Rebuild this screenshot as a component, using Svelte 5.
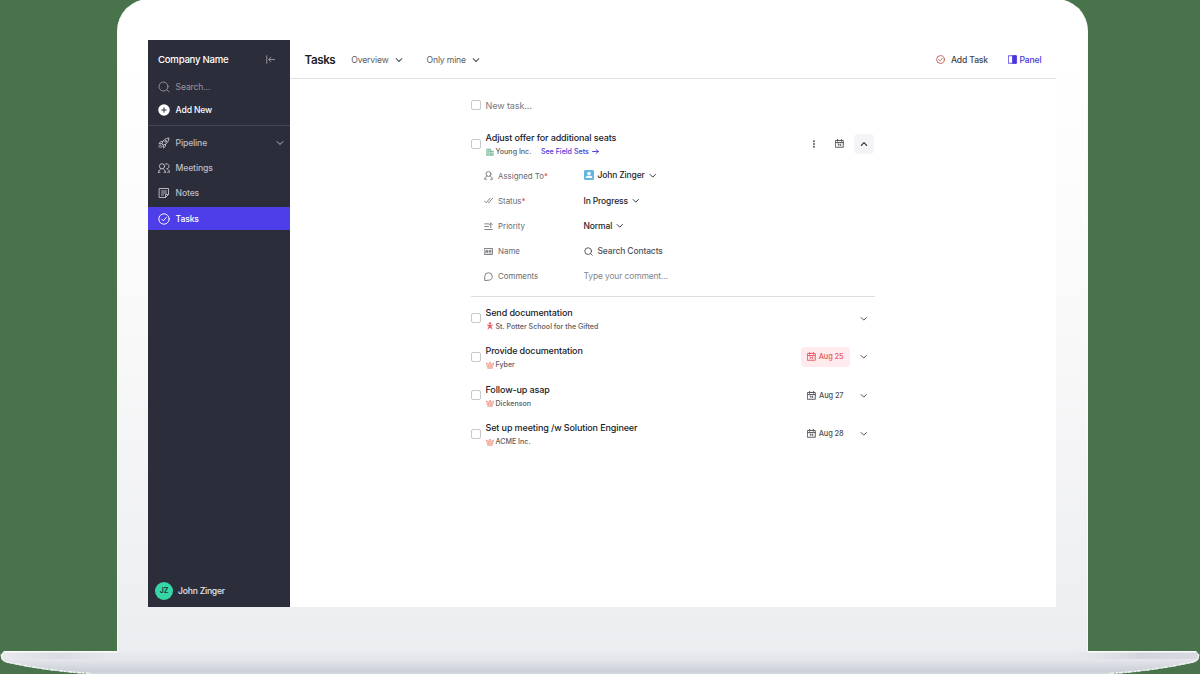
<script lang="ts">
  type Task = { title: string; company: string; icon: string; due?: string; late?: boolean };

  const nav = [
    { label: 'Pipeline', icon: 'rocket', expandable: true },
    { label: 'Meetings', icon: 'people' },
    { label: 'Notes', icon: 'note' },
    { label: 'Tasks', icon: 'check' },
  ];

  const fields = [
    { label: 'Assigned To', icon: 'person', required: true, value: 'John Zinger', kind: 'user' },
    { label: 'Status', icon: 'double', required: true, value: 'In Progress', kind: 'select' },
    { label: 'Priority', icon: 'priority', value: 'Normal', kind: 'select' },
    { label: 'Name', icon: 'card', value: 'Search Contacts', kind: 'search' },
    { label: 'Comments', icon: 'comment', value: 'Type your comment...', kind: 'input' },
  ];

  const tasks: Task[] = [
    { title: 'Send documentation', company: 'St. Potter School for the Gifted', icon: 'star' },
    { title: 'Provide documentation', company: 'Fyber', icon: 'crown', due: 'Aug 25', late: true },
    { title: 'Follow-up asap', company: 'Dickenson', icon: 'crown', due: 'Aug 27' },
    { title: 'Set up meeting /w Solution Engineer', company: 'ACME Inc.', icon: 'crown', due: 'Aug 28' },
  ];

  let active = $state('Tasks');
</script>

{#snippet icon(name: string, size: number, stroke = 1.5)}
  <svg class="icon" width={size} height={size} viewBox="0 0 24 24" fill="none" stroke="currentColor" stroke-width={stroke} stroke-linecap="round" stroke-linejoin="round">
    {#if name === 'search'}
      <circle cx="11" cy="11" r="9" /><path d="M17.5 17.5 22 22" />
    {:else if name === 'collapse'}
      <path d="M2 2v20M23 12H8M13 6 7 12l6 6" />
    {:else if name === 'plus'}
      <circle cx="12" cy="12" r="11.5" fill="#fff" stroke="none" /><path d="M12 7.5v9M7.5 12h9" stroke="#2c2d3c" />
    {:else if name === 'rocket'}
      <path d="M8 13c1.5-6 6-10.5 14-11-.5 8-5 12.5-11 14z" />
      <path d="M9.5 9H5.5L2 13l5.5.5M15 14.5v4L11 22l-.5-5.5" />
      <path d="M6 16.5 2 20.5M8.5 18.5 5.5 21.5M3.5 15.5 2 17" />
      <circle cx="15.5" cy="8.5" r="1.8" />
    {:else if name === 'people'}
      <circle cx="8" cy="8.5" r="5.2" /><path d="M1 20.5c.4-3.800 2.500-6 5-6.700M10 13.800c2.500.7 4.600 2.900 5 6.700M1 20.500h3M12 20.500h3" />
      <path d="M14.5 4.2a5 5 0 1 1 2.500 9.300c3.500.6 5.600 3 6 7h-4" />
    {:else if name === 'note'}
      <path d="M3 3h18v12l-6 6H3zM15 21v-6h6M7 8h10M7 12h10M7 16h4" />
    {:else if name === 'check'}
      <circle cx="12" cy="12" r="10.4" /><path d="m7.5 12.3 3.200 3.200 6-6.500" />
    {:else if name === 'down'}
      <path d="m3.500 8 8.500 8.500L20.500 8" />
    {:else if name === 'up'}
      <path d="m4 16 8-8 8 8" />
    {:else if name === 'right'}
      <path d="M2 12h20M14 5l7.5 7-7.500 7" />
    {:else if name === 'person'}
      <circle cx="12" cy="8" r="6.5" /><path d="M8 13.5C4.500 15 2 17.500 1.500 22h5M16 13.500c3.500 1.500 6 4 6.500 8.500h-5" />
    {:else if name === 'double'}
      <path d="m1 13 5 5L16 6M11.5 17l1 1L23 6" />
    {:else if name === 'priority'}
      <path d="M2 5h10M2 12h10M2 20h20M18 15V3M14 7l4-4 4 4" />
    {:else if name === 'card'}
      <path d="M1.5 4h21v16h-21zM5 16V9h5v7M5 13h5M14 9h5M14 12h5M14 16h5" />
    {:else if name === 'comment'}
      <path d="M2 22V12A10 10 0 1 1 12 22z" />
    {:else if name === 'calendar'}
      <path d="M2 4h20v18H2zM2 9.5h20M7 1v5M17 1v5M8 13.500h3l-1 4M15 13.500v4" />
    {:else if name === 'dots'}
      <g fill="currentColor" stroke="none"><circle cx="12" cy="3.5" r="2.9" /><circle cx="12" cy="12" r="2.9" /><circle cx="12" cy="20.5" r="2.9" /></g>
    {:else if name === 'panel'}
      <path d="M2 2h20v20H2z" /><path d="M13 2h9v20h-9z" fill="currentColor" />
    {:else if name === 'building'}
      <path d="M1 2h14v6h8v15H1z" fill="#7fb99c" stroke="none" /><path d="M4 7h3M10 7h2M4 12h3M4 17h3M10 12v11M14 14h9M17 18h3" stroke="#fff" />
    {:else if name === 'star'}
      <g fill="currentColor" stroke="none"><circle cx="12" cy="4" r="3.5" /><path d="M1 8h22l-7 5 4 10-8-6-8 6 4-10z" /></g>
    {:else if name === 'crown'}
      <path d="M4 17 1.5 6 8 11l4-8 4 8 6.500-5L20 17zM5 21.500h14" />
      <path d="M8 12v4M12 9v7M16 12v4" />
    {/if}
  </svg>
{/snippet}

<div class="backdrop">
  <div class="laptop">
    <div class="screen">
      <aside class="sidebar">
        <div class="company">
          <span>Company Name</span>
          {@render icon('collapse', 9, 2.2)}
        </div>
        <div class="quick search">{@render icon('search', 12, 1.8)}<span>Search...</span></div>
        <div class="quick add">{@render icon('plus', 12, 2)}<span>Add New</span></div>
        <nav>
          {#each nav as item}
            <button class="nav-item" class:active={active === item.label} onclick={() => (active = item.label)}>
              {@render icon(item.icon, 12, 1.9)}
              <span>{item.label}</span>
              {#if item.expandable}
                <i>{@render icon('down', 8, 3)}</i>
              {/if}
            </button>
          {/each}
        </nav>
        <div class="account">
          <span class="avatar">JZ</span>
          <span>John Zinger</span>
        </div>
      </aside>

      <main>
        <header>
          <h1>Tasks</h1>
          <div class="filter overview"><span>Overview</span>{@render icon('down', 8, 3.2)}</div>
          <div class="filter"><span>Only mine</span>{@render icon('down', 8, 3.2)}</div>
          <div class="header-actions">
            <div class="add-task">{@render icon('check', 9, 2.5)}<span>Add Task</span></div>
            <div class="panel">{@render icon('panel', 9, 2.2)}<span>Panel</span></div>
          </div>
        </header>

        <section class="list">
          <div class="new-task"><span class="box"></span><span>New task...</span></div>

          <article class="open">
            <div class="task">
              <span class="box"></span>
              <div class="summary">
                <h2>Adjust offer for additional seats</h2>
                <p>
                  {@render icon('building', 8, 1.8)}<span>Young Inc.</span>
                  <a href="#fields">See Field Sets {@render icon('right', 7, 3.2)}</a>
                </p>
              </div>
              <div class="tools">
                <b>{@render icon('dots', 8)}</b>
                <b>{@render icon('calendar', 9, 2.5)}</b>
                <b class="toggle">{@render icon('up', 8, 3.5)}</b>
              </div>
            </div>
            <div class="fields">
              {#each fields as field}
                <div class="field">
                  <div class="label">
                    {@render icon(field.icon, 9, 2.2)}
                    <span>{field.label}{#if field.required}<em>*</em>{/if}</span>
                  </div>
                  <div class="value {field.kind}">
                    {#if field.kind === 'user'}
                      <svg class="icon" width="10" height="10" viewBox="0 0 20 20">
                        <rect width="20" height="20" rx="3" fill="#62b6df" />
                        <circle cx="10" cy="7" r="3.5" fill="#fff" />
                        <path d="M3.5 16v-1.500c0-2 2-3 6.500-3s6.500 1 6.500 3V16z" fill="#fff" />
                      </svg>
                    {:else if field.kind === 'search'}
                      {@render icon('search', 9, 2.4)}
                    {/if}
                    <span>{field.value}</span>
                    {#if field.kind === 'user' || field.kind === 'select'}
                      {@render icon('down', 7.5, 3)}
                    {/if}
                  </div>
                </div>
              {/each}
            </div>
          </article>

          {#each tasks as task}
            <div class="task">
              <span class="box"></span>
              <div class="summary">
                <h2>{task.title}</h2>
                <p class={task.icon}>{@render icon(task.icon, 8, 2.4)}<span>{task.company}</span></p>
              </div>
              <div class="tools">
                {#if task.due}
                  <span class="due" class:late={task.late}>{@render icon('calendar', 9, 2.5)}{task.due}</span>
                {/if}
                <b class="plain">{@render icon('down', 7.5, 3.2)}</b>
              </div>
            </div>
          {/each}
        </section>
      </main>
    </div>
  </div>

  <svg class="base" width="1200" height="23" viewBox="0 0 1200 23">
    <defs>
      <linearGradient id="metal" x1="0" y1="0" x2="0" y2="1">
        <stop offset="0" stop-color="#ebecef" />
        <stop offset="0.4" stop-color="#e3e5ea" />
        <stop offset="0.85" stop-color="#ccd1d9" />
        <stop offset="1" stop-color="#d3d8e0" />
      </linearGradient>
      <linearGradient id="ends" x1="0" y1="0" x2="1" y2="0">
        <stop offset="0" stop-color="#e9eaee" />
        <stop offset="0.05" stop-color="#dadbe2" />
        <stop offset="0.12" stop-color="#e9eaed" stop-opacity="0" />
        <stop offset="0.88" stop-color="#e9eaed" stop-opacity="0" />
        <stop offset="0.95" stop-color="#d3d4dd" />
        <stop offset="1" stop-color="#d8d9e1" />
      </linearGradient>
    </defs>
    <path d="M4 0H1196q3 2 3 7-1 4-7 5-42 9-82 11H92Q48 21 8 12q-6-1-7-5 0-5 3-7z" fill="url(#metal)" />
    <path d="M4 1H1196q3 2 3 7H1q0-5 3-7z" fill="url(#ends)" />
    <path d="M4 .8H117M1088 .8H1196" stroke="#fafbfa" stroke-width="1.6" />
    <path d="M1.5 3q-1 5 6 8 42 9 84 11.500M1198.500 3q1 5-6 8-42 9-84 11.500" fill="none" stroke="#eef5ef" stroke-width="1.5" stroke-dasharray="4 1 2 2" />
  </svg>
</div>

<style>
  :global(body) {
    background: #48734b;
    overflow: hidden;
  }

  .backdrop {
    width: 1200px;
    height: 674px;
    background: #48734b;
    font-family: Inter, 'Liberation Sans', sans-serif;
    font-size: 9px;
    color: #25262b;
    position: relative;
    overflow: hidden;
  }

  .laptop {
    box-sizing: border-box;
    width: 971.5px;
    height: 654px;
    margin: -1px 0 0 116.5px;
    padding: 41px 0 0 31.5px;
    border: solid #f7faf7;
    border-width: 0 1px;
    border-radius: 32px 32px 0 0;
    background: linear-gradient(#fff 0, #fff 10%, #f9f9fa 50%, #eff0f2 88%, #ecedf0);
  }

  .screen {
    display: flex;
    width: 907.5px;
    height: 567px;
    margin-left: -1px;
    background: #fff;
  }

  .base {
    position: absolute;
    left: 0;
    top: 651px;
  }

  .icon {
    flex: none;
    display: block;
  }

  .sidebar {
    width: 141.5px;
    display: flex;
    flex-direction: column;
    background: #2c2d3a;
    color: #e6e6eb;
    font-size: 8.6px;
    letter-spacing: -0.14px;
    font-weight: 500;
  }

  .company {
    height: 38px;
    padding: 0 15px 0 10px;
    display: flex;
    align-items: center;
    justify-content: space-between;
    font-size: 9.6px;
    letter-spacing: -0.24px;
    color: #fff;
  }

  .company .icon {
    color: #a5a6b0;
  }

  .quick {
    height: 23px;
    padding-left: 10px;
    display: flex;
    align-items: center;
    gap: 5.6px;
  }

  .quick.search {
    margin-top: -3px;
    color: #9798a3;
    font-weight: 400;
  }

  .quick.add {
    color: #fff;
  }

  nav {
    border-top: 1px solid #454653;
    margin-top: 4px;
    padding-top: 5px;
  }

  .nav-item {
    width: 100%;
    height: 23px;
    margin: 0 0 2.2px;
    padding: 1px 6px 0 10px;
    border: none;
    background: none;
    display: flex;
    align-items: center;
    gap: 5.6px;
    font: inherit;
    letter-spacing: inherit;
    color: #bdbec8;
    cursor: pointer;
  }

  .nav-item i {
    margin-left: auto;
  }

  .nav-item.active {
    background: #4d3ee9;
    color: #fff;
  }

  .account {
    margin-top: auto;
    height: 33px;
    padding-left: 7px;
    display: flex;
    align-items: center;
    gap: 5px;
    letter-spacing: -0.22px;
  }

  .avatar {
    width: 18px;
    height: 18px;
    border-radius: 50%;
    background: #37d6a7;
    color: #17423d;
    font-size: 7px;
    font-weight: 700;
    letter-spacing: 0;
    line-height: 18px;
    text-align: center;
  }

  main {
    flex: 1;
  }

  header {
    box-sizing: border-box;
    height: 39px;
    padding: 1px 14px 0 15px;
    border-bottom: 1px solid #e0e0e2;
    display: flex;
    align-items: center;
    font-size: 8.6px;
    letter-spacing: -0.15px;
    color: #5b5c62;
  }

  h1 {
    margin: 0 16px 0 0;
    font-size: 11.6px;
    letter-spacing: -0.4px;
    font-weight: 600;
    color: #202127;
  }

  .filter {
    display: flex;
    align-items: center;
    gap: 6.5px;
  }

  .overview {
    margin-right: 23.5px;
  }

  .header-actions {
    margin-left: auto;
    display: flex;
    gap: 19.5px;
    font-weight: 500;
  }

  .header-actions div {
    display: flex;
    align-items: center;
    gap: 5.5px;
    color: #44454b;
  }

  .header-actions .add-task .icon {
    color: #c15f5a;
  }

  .header-actions .panel {
    gap: 3px;
    color: #4736db;
  }

  .list {
    width: 404px;
    margin: 0 auto;
    padding-top: 16px;
  }

  .box {
    box-sizing: border-box;
    flex: none;
    width: 10px;
    height: 10px;
    border: 1px solid #c7c8cc;
    border-radius: 2px;
  }

  .new-task {
    height: 20px;
    display: flex;
    align-items: center;
    gap: 5px;
    letter-spacing: -0.08px;
    color: #77787e;
  }

  .open {
    height: 181px;
    margin-bottom: 2.3px;
    border-bottom: 1px solid #dedee1;
    display: flex;
    flex-direction: column;
  }

  .open .task {
    margin-top: 9.5px;
  }

  .task {
    height: 38.4px;
    display: flex;
    align-items: center;
    gap: 5px;
  }

  .summary {
    padding-top: 2px;
  }

  h2 {
    margin: 0;
    font-size: 9px;
    letter-spacing: -0.12px;
    line-height: 14px;
    font-weight: 500;
    color: #202127;
  }

  .summary p {
    margin: 0;
    display: flex;
    align-items: center;
    gap: 2px;
    font-size: 7.1px;
    line-height: 13px;
    font-weight: 500;
    color: #5c5d63;
  }

  .summary p.star {
    --mark: #e8616a;
  }

  .summary p.crown {
    --mark: #ee8573;
  }

  .summary p .icon {
    color: var(--mark);
  }

  .summary a {
    margin-left: 7.5px;
    display: flex;
    align-items: center;
    gap: 3px;
    color: #4736db;
    text-decoration: none;
  }

  .summary a .icon {
    color: inherit;
  }

  .tools {
    margin: 0 0.5px 0 auto;
    display: flex;
    align-items: center;
    color: #505157;
  }

  .tools b {
    width: 20px;
    height: 20px;
    margin-left: 5px;
    display: grid;
    place-items: center;
  }

  .tools .toggle {
    border-radius: 4px;
    background: #f4f4f6;
    color: #2c2d33;
  }

  .tools .plain {
    margin-left: 4.5px;
  }

  .due {
    height: 20px;
    padding: 0 6px;
    display: flex;
    align-items: center;
    gap: 3px;
    border-radius: 4px;
    font-size: 7.4px;
    letter-spacing: -0.1px;
    font-weight: 500;
  }

  .due.late {
    background: #ffebed;
    color: #e85b62;
  }

  .field {
    height: 25.2px;
    padding-left: 13px;
    display: flex;
    align-items: center;
  }

  .label {
    width: 100px;
    display: flex;
    align-items: center;
    gap: 5.5px;
    padding-top: 0.5px;
    font-size: 7.9px;
    color: #68696f;
  }

  em {
    color: #e5404c;
    font-style: normal;
  }

  .value {
    display: flex;
    align-items: center;
    gap: 4px;
    font-size: 8.5px;
    letter-spacing: -0.14px;
    font-weight: 500;
  }

  .value.search {
    gap: 5px;
    color: #505157;
  }

  .value.input {
    letter-spacing: -0.16px;
    color: #85868c;
    font-weight: 400;
  }
</style>
